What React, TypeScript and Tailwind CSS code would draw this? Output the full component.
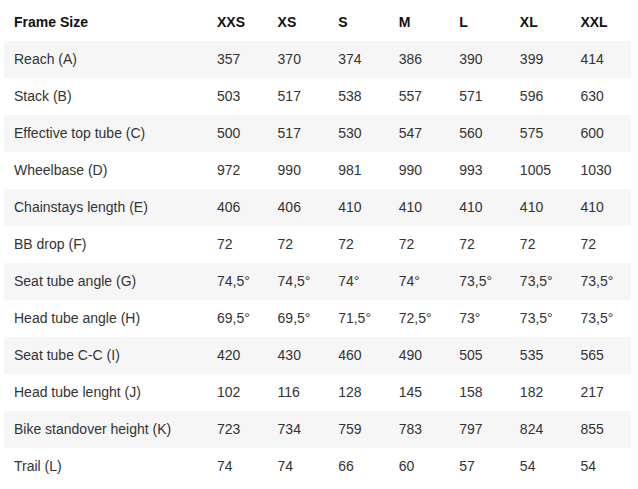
import React from "react";

const sizes = ["XXS", "XS", "S", "M", "L", "XL", "XXL"];
const rows: [string, string[]][] = [
  ["Reach (A)", ["357", "370", "374", "386", "390", "399", "414"]],
  ["Stack (B)", ["503", "517", "538", "557", "571", "596", "630"]],
  ["Effective top tube (C)", ["500", "517", "530", "547", "560", "575", "600"]],
  ["Wheelbase (D)", ["972", "990", "981", "990", "993", "1005", "1030"]],
  ["Chainstays length (E)", ["406", "406", "410", "410", "410", "410", "410"]],
  ["BB drop (F)", ["72", "72", "72", "72", "72", "72", "72"]],
  ["Seat tube angle (G)", ["74,5°", "74,5°", "74°", "74°", "73,5°", "73,5°", "73,5°"]],
  ["Head tube angle (H)", ["69,5°", "69,5°", "71,5°", "72,5°", "73°", "73,5°", "73,5°"]],
  ["Seat tube C-C (I)", ["420", "430", "460", "490", "505", "535", "565"]],
  ["Head tube lenght (J)", ["102", "116", "128", "145", "158", "182", "217"]],
  ["Bike standover height (K)", ["723", "734", "759", "783", "797", "824", "855"]],
  ["Trail (L)", ["74", "74", "66", "60", "57", "54", "54"]],
];

export default function App() {
  return (
    <div
      className="w-[638px] h-[489px] bg-white pt-[4px] pl-[4px]"
      style={{ fontFamily: '"Liberation Sans", Arial, sans-serif' }}
    >
      <div className="w-[627px] text-[14px]">
        <div className="grid grid-cols-[203px_repeat(7,1fr)] h-[37px] items-center font-bold text-[#111]">
          <div className="pl-[10px]">Frame Size</div>
          {sizes.map((s) => (
            <div key={s} className="pl-[10px]">{s}</div>
          ))}
        </div>
        {rows.map(([label, vals], i) => (
          <div
            key={label}
            className={
              "grid grid-cols-[203px_repeat(7,1fr)] h-[37px] items-center text-[#333] " +
              (i % 2 === 0 ? "bg-[#f6f6f6]" : "bg-white")
            }
          >
            <div className="pl-[10px] whitespace-nowrap">{label}</div>
            {vals.map((v, j) => (
              <div key={j} className="pl-[10px] whitespace-nowrap">{v}</div>
            ))}
          </div>
        ))}
      </div>
    </div>
  );
}
